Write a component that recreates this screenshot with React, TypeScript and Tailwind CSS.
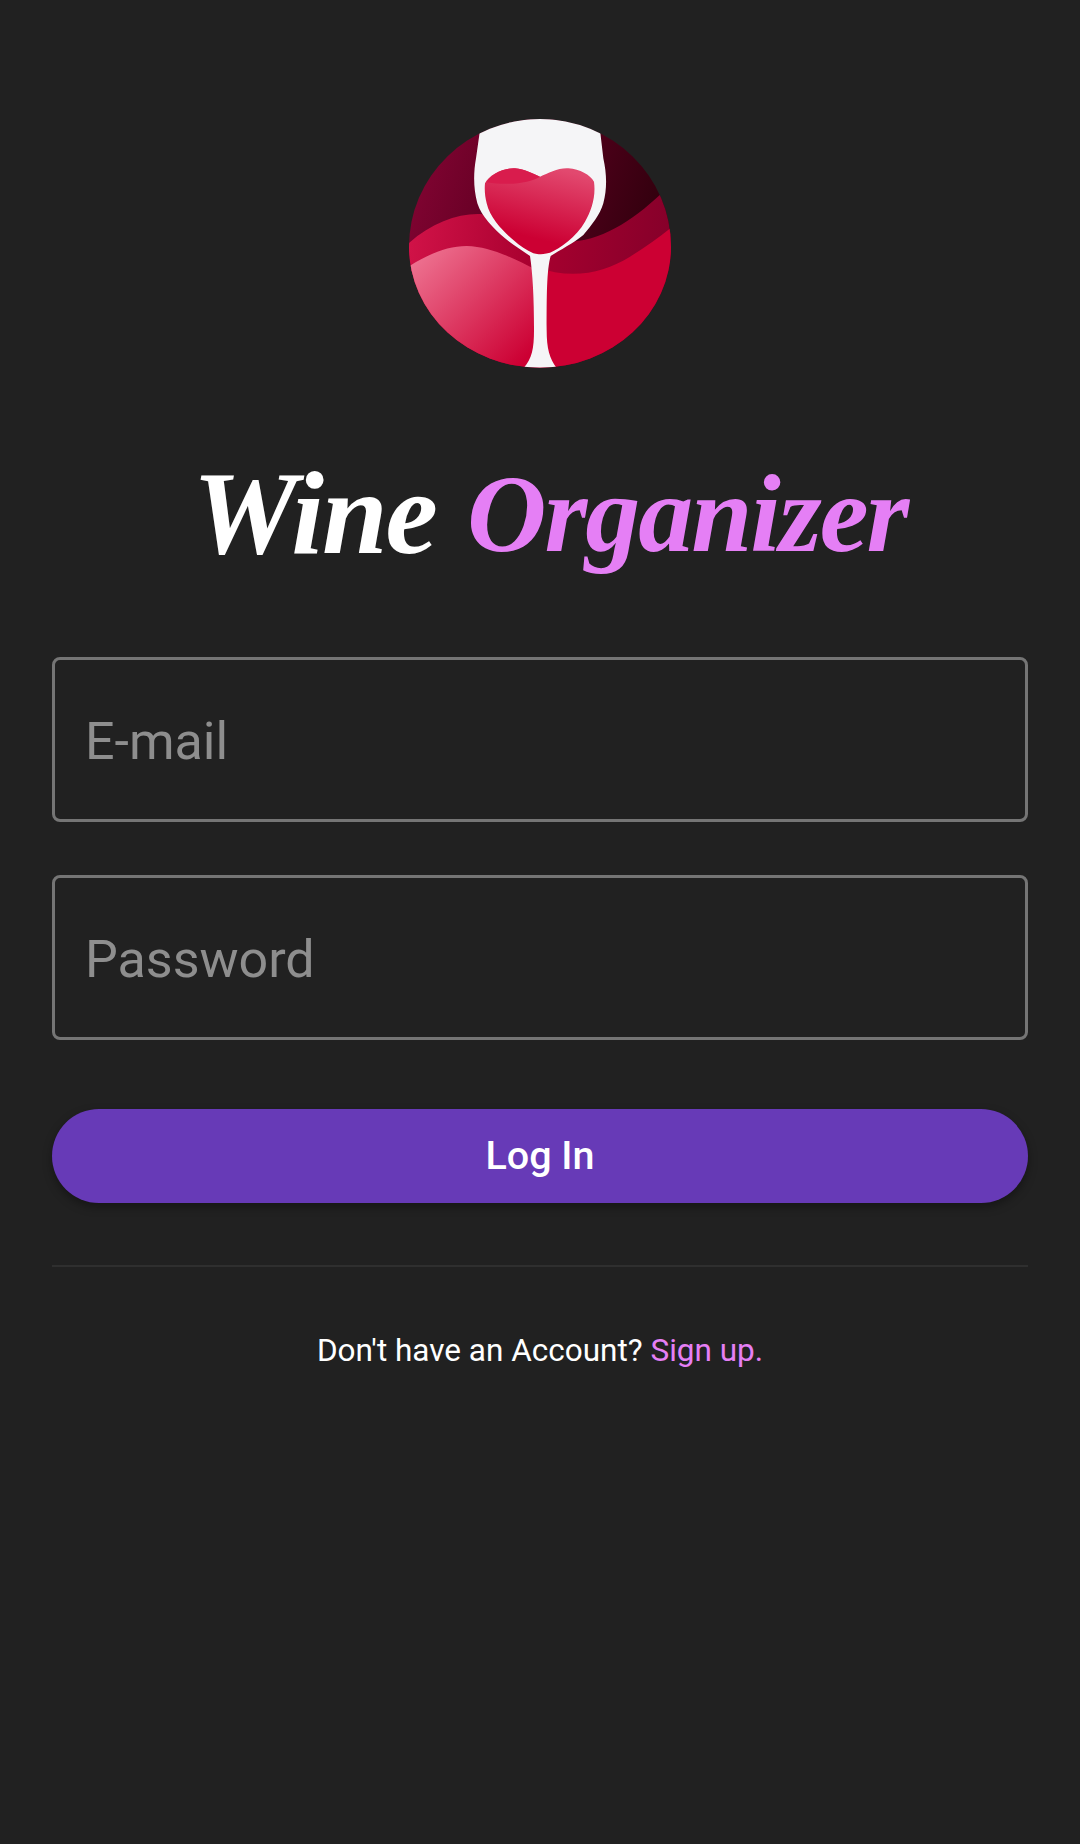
import React from "react";

const WineLogo: React.FC = () => (
  <svg width="300" height="290" viewBox="0 0 900 870" className="block">
    <defs>
      <clipPath id="disc">
        <path d="M57 440A393 383 0 0 1 843 440A393 363 0 0 1 57 440Z" />
      </clipPath>
      <linearGradient id="back" x1="0" y1="0" x2="1" y2="0.3">
        <stop offset="0" stopColor="#8a0536" />
        <stop offset="0.4" stopColor="#650024" />
        <stop offset="1" stopColor="#2e000c" />
      </linearGradient>
      <linearGradient id="band" x1="0" y1="0" x2="1" y2="0.1">
        <stop offset="0" stopColor="#d5144a" />
        <stop offset="0.5" stopColor="#a8002f" />
        <stop offset="1" stopColor="#85002a" />
      </linearGradient>
      <linearGradient id="left" x1="0.05" y1="0.1" x2="0.85" y2="0.9">
        <stop offset="0" stopColor="#ee7492" />
        <stop offset="1" stopColor="#cc0033" />
      </linearGradient>
      <linearGradient id="wine" x1="0.65" y1="0" x2="0.4" y2="0.8">
        <stop offset="0" stopColor="#e2496f" />
        <stop offset="1" stopColor="#cc0033" />
      </linearGradient>
    </defs>
    <g clipPath="url(#disc)">
      <rect x="40" y="40" width="820" height="800" fill="url(#back)" />
      <path
        d="M50 435C120 370 200 340 270 342C340 350 430 410 520 425C620 430 720 370 815 280L860 300V840H40V440Z"
        fill="url(#band)"
      />
      <path
        d="M440 500C540 540 640 520 720 470C770 440 810 410 850 378V840H440Z"
        fill="#cc0033"
      />
      <path
        d="M60 497C120 460 175 438 230 438C300 440 360 470 440 510V840H40V500Z"
        fill="url(#left)"
      />
      <path
        d="M270 90C380 45 520 45 630 90L640 175C650 220 652 265 640 310C630 345 605 375 580 405C550 430 510 450 482 468C470 510 470 590 470 690C470 750 480 780 505 810H395C425 780 432 750 432 690C432 590 428 520 420 468C395 450 370 435 345 415C310 385 275 350 262 310C250 265 250 220 258 175Z"
        fill="#f5f5f7"
      />
      <path
        d="M285 250C296 225 340 203 375 205C405 207 430 222 450 230C475 220 505 203 535 205C570 207 600 225 612 245C618 290 605 330 585 365C560 410 510 445 480 458C450 464 440 463 430 460C410 450 390 438 370 420C340 395 300 355 290 310C285 290 283 270 285 250Z"
        fill="url(#wine)"
      />
      <path
        d="M290 247C300 225 340 203 375 205C405 207 430 222 450 230C420 248 360 258 290 247Z"
        fill="#d91c4d"
      />
    </g>
  </svg>
);

const inputClass =
  "block w-full h-[165px] rounded-lg border-[3px] border-[#757575] bg-transparent pt-[4px] px-[30px] text-[52px] text-white outline-none placeholder:text-[#8e8e8e]";

export default function App() {
  return (
    <div className="min-h-[1844px] bg-[#212121] px-[52px] font-['Roboto',sans-serif]">
      <div className="flex justify-center pt-[100px]">
        <WineLogo />
      </div>

      <h1 className="mt-[44px] flex h-[223px] justify-center gap-[31px] pl-[20px] font-['Liberation_Serif',serif] font-bold italic leading-[160px] whitespace-nowrap text-white">
        <span className="text-[118px] tracking-[-2px]">Wine</span>
        <span className="text-[110px] tracking-[-2px] text-[#e57ff5]">Organizer</span>
      </h1>

      <div className="flex flex-col gap-[53px]">
        <input className={inputClass} type="text" placeholder="E-mail" />
        <input className={inputClass} type="password" placeholder="Password" />
      </div>

      <button
        type="button"
        className="mt-[69px] block h-[94px] w-full rounded-full bg-[#673ab7] text-[39.5px] font-medium text-white shadow-[0_4px_10px_rgba(0,0,0,0.35)]"
      >
        Log In
      </button>

      <div className="mt-[62px] h-[2px] bg-[#2f2f2f]" />

      <p className="mt-[64px] text-center text-[31.5px] leading-[40px] text-white">
        Don't have an Account? <span className="text-[#e57ff5]">Sign up.</span>
      </p>
    </div>
  );
}
